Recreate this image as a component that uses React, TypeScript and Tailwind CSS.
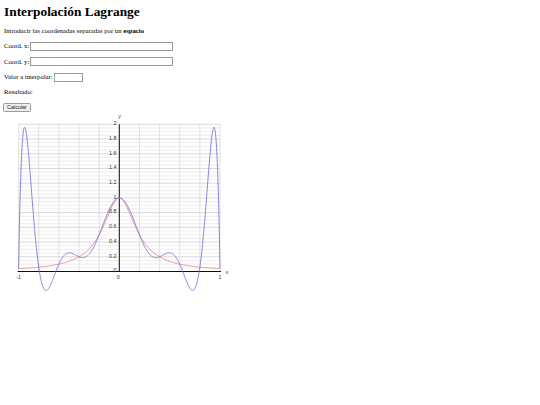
import React from "react";

const runge = (x: number) => 1 / (1 + 25 * x * x);
const nodes = Array.from({ length: 11 }, (_, i) => -1 + 0.2 * i);

function lagrange(x: number) {
  let sum = 0;
  for (let i = 0; i < nodes.length; i++) {
    let term = runge(nodes[i]);
    for (let j = 0; j < nodes.length; j++) {
      if (j !== i) term *= (x - nodes[j]) / (nodes[i] - nodes[j]);
    }
    sum += term;
  }
  return sum;
}

const X = (x: number) => 119.3 + 100.7 * x;
const Y = (y: number) => 271.5 - 73.6 * y;

function curve(f: (x: number) => number) {
  const pts: string[] = [];
  for (let k = 0; k <= 600; k++) {
    const x = -1 + (2 * k) / 600;
    pts.push(`${X(x).toFixed(2)},${Y(f(x)).toFixed(2)}`);
  }
  return "M" + pts.join(" L");
}

const yTicks = [0, 0.2, 0.4, 0.6, 0.8, 1, 1.2, 1.4, 1.6, 1.8, 2];

function Chart() {
  const minor = Array.from({ length: 41 }, (_, i) => i * 0.05);
  const vert = Array.from({ length: 11 }, (_, i) => -1 + 0.2 * i);
  return (
    <svg width={240} height={188} viewBox="0 112 240 188" className="block">
      {minor.map((v, i) => (
        <line key={"m" + i} x1={X(-1)} x2={X(1)} y1={Y(v)} y2={Y(v)} stroke={i % 4 === 0 ? "#cfcfcf" : "#e9e9e9"} strokeWidth={0.8} />
      ))}
      {vert.map((v, i) => (
        <line key={"v" + i} x1={X(v)} x2={X(v)} y1={Y(2)} y2={Y(0)} stroke="#dadada" strokeWidth={0.8} />
      ))}
      <line x1={X(0)} x2={X(0)} y1={Y(2)} y2={Y(0)} stroke="#111" strokeWidth={1} />
      <line x1={X(-1) - 1} x2={X(1) + 1} y1={Y(0)} y2={Y(0)} stroke="#111" strokeWidth={1} />
      <path d={curve(runge)} fill="none" stroke="#e07878" strokeWidth={0.8} />
      <path d={curve(lagrange)} fill="none" stroke="#6b6bd6" strokeWidth={0.8} />
      <g fontFamily="'Liberation Sans', Arial, sans-serif" fontSize={5.4} fill="#333">
        {yTicks.map((t) => (
          <text key={t} x={116.5} y={Y(t) + 0.8} textAnchor="end">
            {t === 0 ? "0" : String(Number(t.toFixed(1)))}
          </text>
        ))}
        <text x={X(-1)} y={279} textAnchor="middle">-1</text>
        <text x={X(0) - 1} y={279} textAnchor="middle">0</text>
        <text x={X(1)} y={279} textAnchor="middle">1</text>
      </g>
      <g fontFamily="'Liberation Sans', Arial, sans-serif" fontSize={6.2} fill="#555">
        <text x={119.5} y={117.5} textAnchor="middle">y</text>
        <text x={227} y={273.5} textAnchor="middle">x</text>
      </g>
    </svg>
  );
}

export default function App() {
  return (
    <div className="min-h-screen bg-white text-black font-['Liberation_Serif','Times_New_Roman',serif]">
      <div className="pl-[4px]">
        <h1 className="pt-[4px] h-[19px] text-[13.4px] leading-[15px] font-bold">
          Interpolación Lagrange
        </h1>
        <div className="mt-[4.5px] flex h-[15.3px] items-center text-[6.7px]">
          <span>
            Introducir las coordenadas separadas por un <b>espacio</b>
          </span>
        </div>
        <div className="flex h-[15.3px] items-center gap-[1px] text-[6.7px]">
          <span>Coord. x:</span>
          <div className="h-[9px] w-[143px] border border-[#9a9a9a] bg-white" />
        </div>
        <div className="flex h-[15.3px] items-center gap-[1px] text-[6.7px]">
          <span>Coord. y:</span>
          <div className="h-[9px] w-[143px] border border-[#9a9a9a] bg-white" />
        </div>
        <div className="flex h-[15.3px] items-center gap-[1px] text-[6.7px]">
          <span>Valor a interpolar:</span>
          <div className="h-[9px] w-[29px] border border-[#9a9a9a] bg-white" />
        </div>
        <div className="flex h-[15.3px] items-center text-[6.7px]">
          <span>Resultado:</span>
        </div>
        <div className="flex h-[12px] items-end">
          <button className="-ml-[1px] flex h-[9px] w-[28px] items-center justify-center rounded-[1.5px] border border-[#9c9c9c] bg-[#efefef] font-['Liberation_Sans',Arial,sans-serif] text-[5.4px] leading-none text-[#222]">
            Calcular
          </button>
        </div>
      </div>
      <Chart />
    </div>
  );
}
